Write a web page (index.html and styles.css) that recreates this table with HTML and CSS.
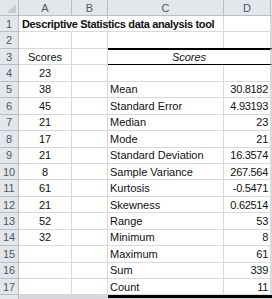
FILE: index.html
```html
<!DOCTYPE html>
<html>
<head>
<meta charset="utf-8">
<link rel="stylesheet" href="styles.css">
</head>
<body>
<div class="sheet">
  <div class="hd corner"><span class="tri"></span></div>
  <div class="hd col">A</div>
  <div class="hd col">B</div>
  <div class="hd col">C</div>
  <div class="hd col">D</div>
  <div class="hd col edge"></div>

  <div class="hd rn">1</div>
  <div class="c title">Descriptive Statistics data analysis tool</div>
  <div class="c"></div><div class="c"></div><div class="c"></div><div class="c"></div>

  <div class="hd rn">2</div>
  <div class="c"></div><div class="c"></div><div class="c"></div><div class="c"></div><div class="c"></div>

  <div class="hd rn">3</div>
  <div class="c ctr">Scores</div><div class="c"></div>
  <div class="c ctr it top bot merged">Scores</div><div class="c top bot"></div>

  <div class="hd rn">4</div>
  <div class="c ctr">23</div><div class="c"></div><div class="c"></div><div class="c"></div><div class="c"></div>

  <div class="hd rn">5</div>
  <div class="c ctr">38</div><div class="c"></div><div class="c lbl">Mean</div><div class="c num">30.8182</div><div class="c"></div>

  <div class="hd rn">6</div>
  <div class="c ctr">45</div><div class="c"></div><div class="c lbl">Standard Error</div><div class="c num">4.93193</div><div class="c"></div>

  <div class="hd rn">7</div>
  <div class="c ctr">21</div><div class="c"></div><div class="c lbl">Median</div><div class="c num">23</div><div class="c"></div>

  <div class="hd rn">8</div>
  <div class="c ctr">17</div><div class="c"></div><div class="c lbl">Mode</div><div class="c num">21</div><div class="c"></div>

  <div class="hd rn">9</div>
  <div class="c ctr">21</div><div class="c"></div><div class="c lbl">Standard Deviation</div><div class="c num">16.3574</div><div class="c"></div>

  <div class="hd rn">10</div>
  <div class="c ctr">8</div><div class="c"></div><div class="c lbl">Sample Variance</div><div class="c num">267.564</div><div class="c"></div>

  <div class="hd rn">11</div>
  <div class="c ctr">61</div><div class="c"></div><div class="c lbl">Kurtosis</div><div class="c num">-0.5471</div><div class="c"></div>

  <div class="hd rn">12</div>
  <div class="c ctr">21</div><div class="c"></div><div class="c lbl">Skewness</div><div class="c num">0.62514</div><div class="c"></div>

  <div class="hd rn">13</div>
  <div class="c ctr">52</div><div class="c"></div><div class="c lbl">Range</div><div class="c num">53</div><div class="c"></div>

  <div class="hd rn">14</div>
  <div class="c ctr">32</div><div class="c"></div><div class="c lbl">Minimum</div><div class="c num">8</div><div class="c"></div>

  <div class="hd rn">15</div>
  <div class="c"></div><div class="c"></div><div class="c lbl">Maximum</div><div class="c num">61</div><div class="c"></div>

  <div class="hd rn">16</div>
  <div class="c"></div><div class="c"></div><div class="c lbl">Sum</div><div class="c num">339</div><div class="c"></div>

  <div class="hd rn">17</div>
  <div class="c"></div><div class="c"></div><div class="c lbl">Count</div><div class="c num">11</div><div class="c"></div>

  <div class="hd rn"></div>
  <div class="c tail"></div><div class="c tail"></div><div class="c tail thick"></div><div class="c tail thick"></div><div class="c tail thick"></div>
</div>
</body>
</html>
```
FILE: styles.css
```css
html, body {
  margin: 0;
  padding: 0;
  background: #ffffff;
  overflow: hidden;
}
.sheet {
  display: grid;
  grid-template-columns: 19px 53px 36px 116px 47px 1px;
  grid-template-rows: 16px repeat(17, 16.45px) 8px;
  font-family: "Liberation Sans", Arial, sans-serif;
  font-size: 11px;
  color: #111;
  width: 272px;
}
.hd {
  background: #e3e6ea;
  color: #4f5966;
  box-sizing: border-box;
  border-right: 1px solid #b8bec6;
  border-bottom: 1px solid #b8bec6;
  display: flex;
  align-items: center;
  justify-content: center;
  font-size: 11px;
  overflow: hidden;
}
.corner {
  position: relative;
}
.tri {
  position: absolute;
  right: 2px;
  bottom: 2px;
  width: 0;
  height: 0;
  border-left: 9px solid transparent;
  border-bottom: 9px solid #c6cacf;
}
.rn {
  justify-content: center;
}
.edge {
  border-right: none;
}
.c {
  box-sizing: border-box;
  border-right: 1px solid #d9d9d9;
  border-bottom: 1px solid #d9d9d9;
  display: flex;
  align-items: center;
  white-space: nowrap;
  overflow: visible;
}
.title {
  font-weight: bold;
  letter-spacing: -0.35px;
  padding-left: 3px;
  border-right-color: transparent;
  position: relative;
  z-index: 1;
}
.ctr {
  justify-content: center;
}
.it {
  font-style: italic;
}
.merged {
  grid-column: span 2;
}
.lbl {
  padding-left: 2px;
}
.num {
  justify-content: flex-end;
  padding-right: 2px;
  letter-spacing: -0.3px;
}
.top {
  border-top: 2px solid #000;
  margin-top: -1px;
}
.bot {
  border-bottom: 1px solid #000;
}
.tail {
  background: #d6d8db;
  border: none;
}
.thick {
  border-top: 3px solid #000;
  background: #d6d8db;
}
```
